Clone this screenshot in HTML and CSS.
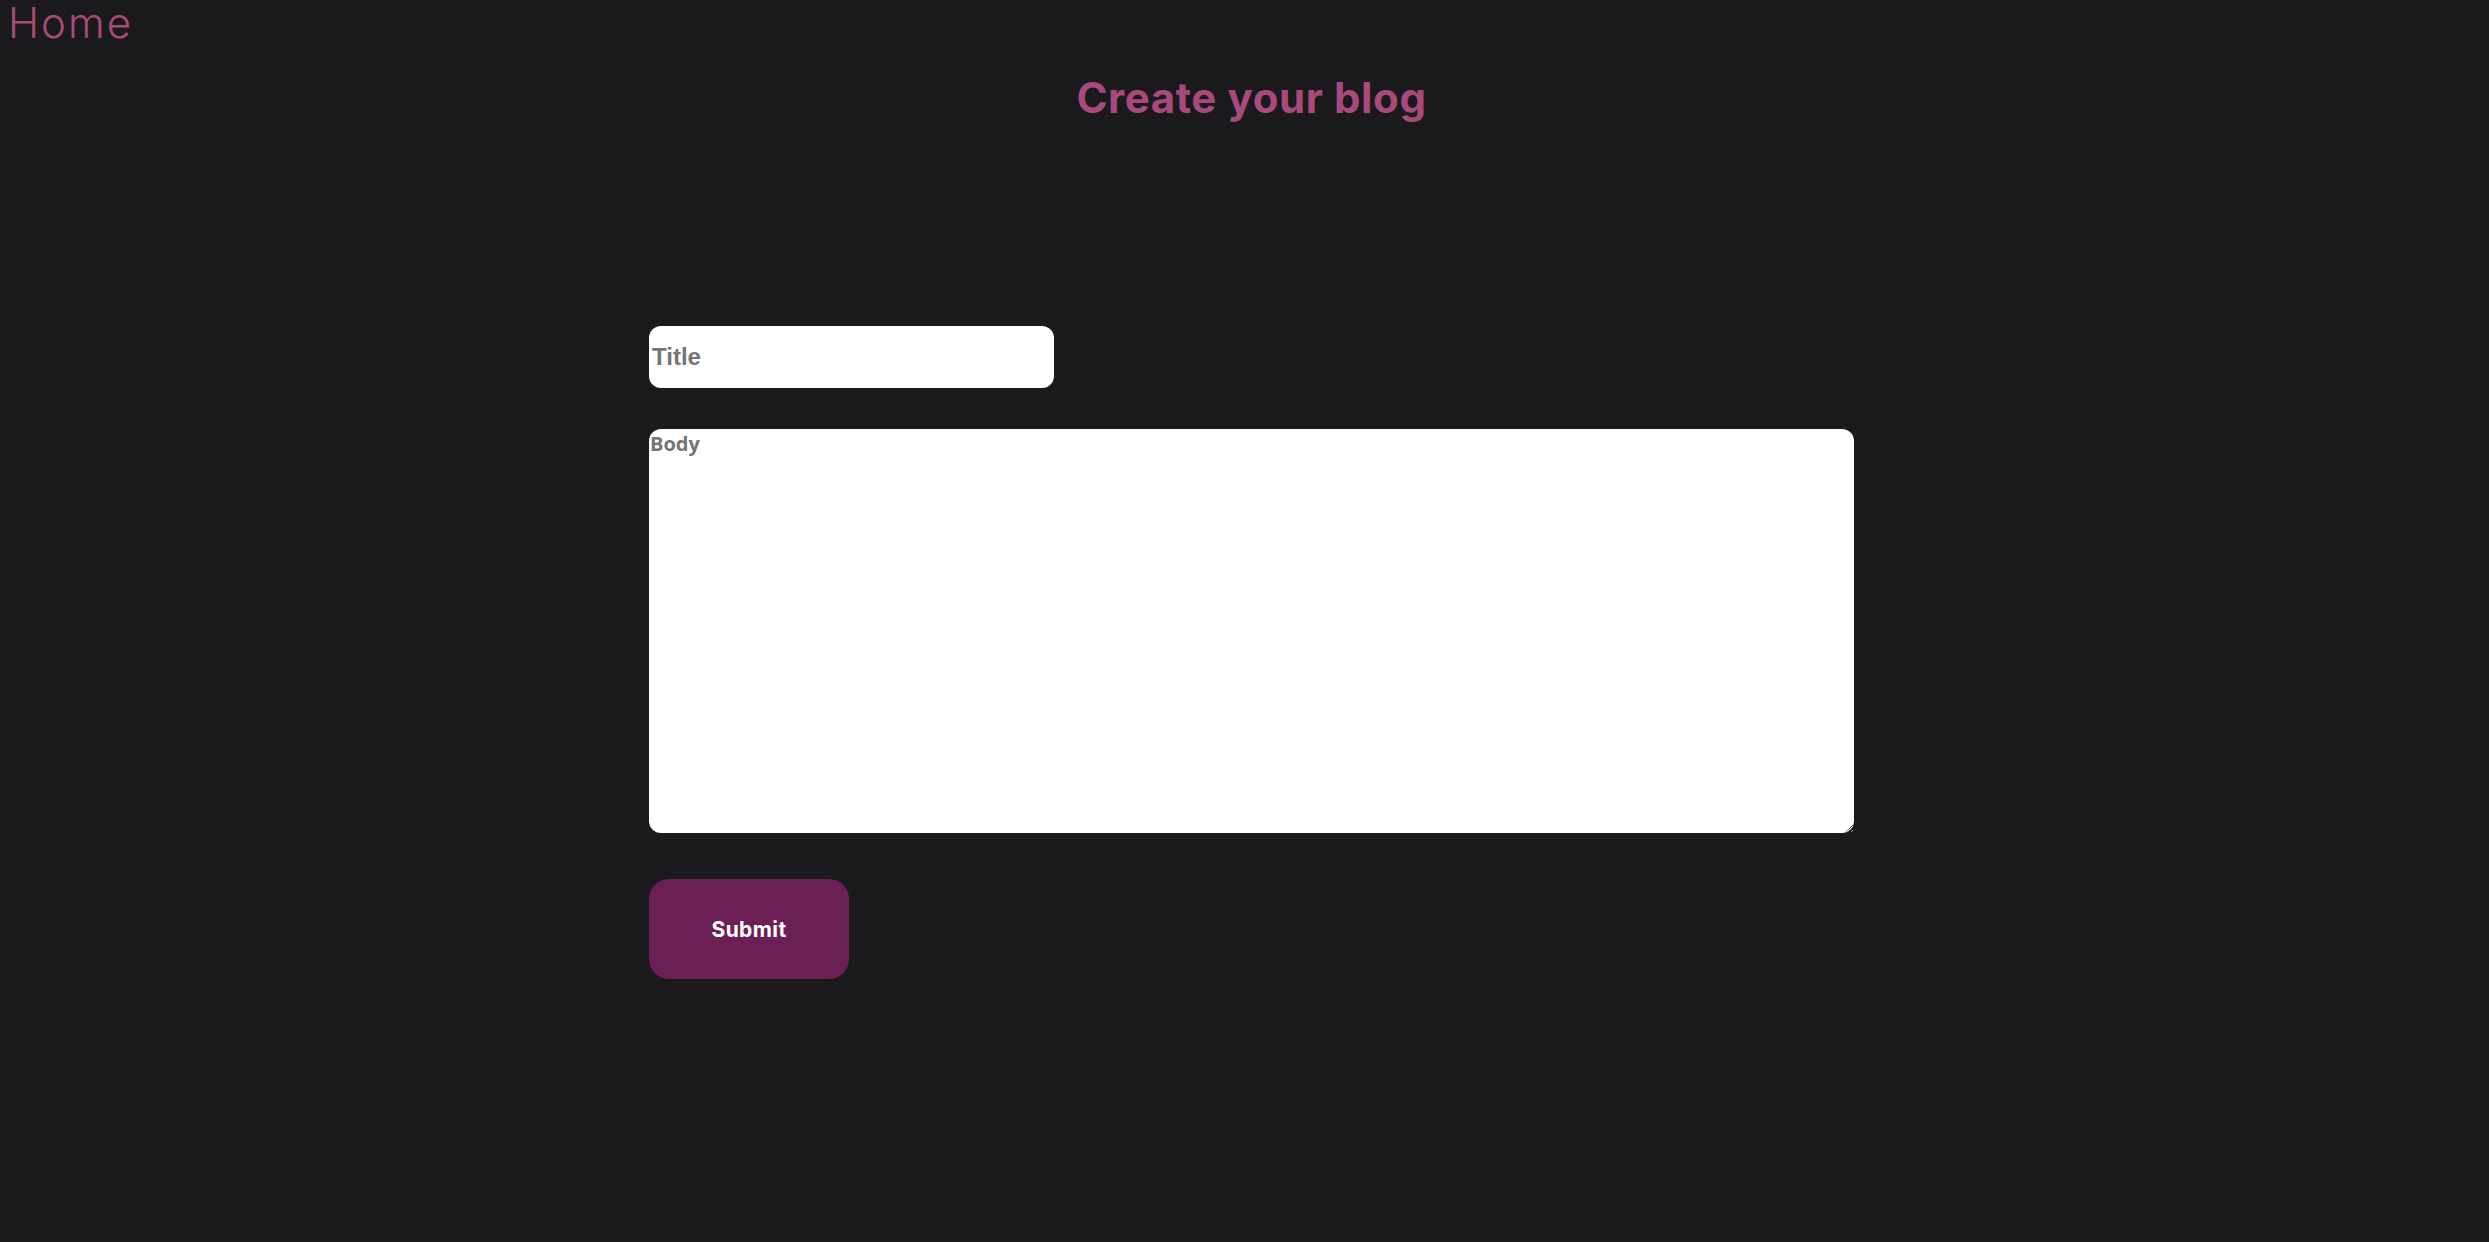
FILE: index.html
```html
<!DOCTYPE html>
<html lang="en">
<head>
<meta charset="utf-8">
<title>Create your blog</title>
<link rel="stylesheet" href="styles.css">
</head>
<body>
<nav class="nav"><a class="home" href="#">Home</a></nav>
<main class="page">
  <h1 class="heading">Create your blog</h1>
  <form class="form">
    <input class="title-input" type="text" placeholder="Title">
    <textarea class="body-input" placeholder="Body"></textarea>
    <button class="submit" type="button">Submit</button>
  </form>
</main>
</body>
</html>
```

FILE: styles.css
```css
html, body {
  margin: 0;
  background: #1b1b1d;
}
body {
  font-family: "Inter", "DejaVu Sans", sans-serif;
  min-height: 1242px;
}
.nav {
  display: flex;
  padding: 2px 0 0 8px;
}
.home {
  color: #a84a7b;
  text-decoration: none;
  font-size: 42px;
  font-weight: 300;
  letter-spacing: 2px;
  line-height: 42px;
}
.page {
  display: flex;
  flex-direction: column;
  align-items: center;
  padding-left: 14px;
}
.heading {
  margin: 26px 0 0;
  color: #a84a7b;
  font-size: 42px;
  font-weight: 700;
  letter-spacing: 0.6px;
  line-height: 56px;
}
.form {
  width: 1205px;
  display: flex;
  flex-direction: column;
  align-items: flex-start;
  margin-top: 200px;
}
.title-input {
  box-sizing: border-box;
  width: 405px;
  height: 62px;
  border: none;
  border-radius: 12px;
  background: #fff;
  padding: 0 3px;
  font-family: "Liberation Sans", Arial, sans-serif;
  font-weight: 700;
  font-size: 24px;
  color: #333;
  outline: none;
}
.title-input::placeholder { color: #757575; }
.body-input {
  box-sizing: border-box;
  width: 1205px;
  height: 404px;
  margin-top: 41px;
  border: none;
  border-radius: 12px;
  background: #fff;
  padding: 1px 1px;
  font-family: "Open Sans", sans-serif;
  font-weight: 700;
  font-size: 20px;
  color: #333;
  outline: none;
}
.body-input::placeholder { color: #757575; }
.submit {
  margin-top: 46px;
  width: 200px;
  height: 100px;
  border: none;
  border-radius: 20px;
  background: #6c1f55;
  color: #fff;
  font-family: "Inter", "DejaVu Sans", sans-serif;
  font-weight: 700;
  font-size: 21px;
  letter-spacing: 0.4px;
}
```
